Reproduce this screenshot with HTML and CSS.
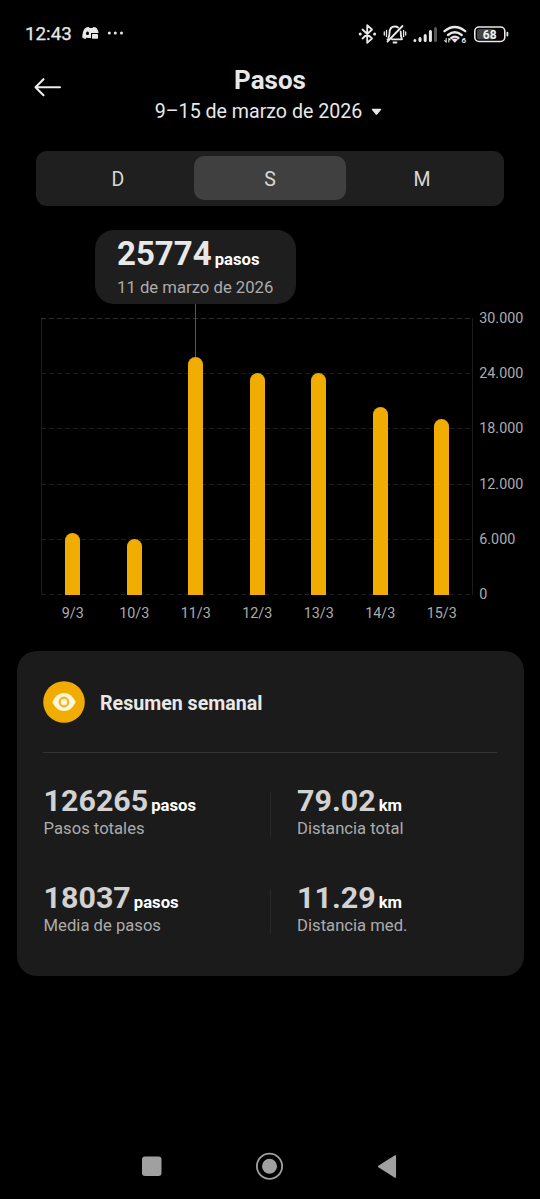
FILE: index.html
```html
<!DOCTYPE html>
<html lang="es">
<head>
<meta charset="utf-8">
<title>Pasos</title>
<link rel="stylesheet" href="styles.css">
</head>
<body>
<div class="screen">
  <div class="status">
    <span class="clock">12:43</span>
    <svg class="status-left" width="46" height="20" viewBox="0 0 46 20" fill="#e8e8e8">
      <path fill-rule="evenodd" d="M3 4.2Q5 2.8 7 3L7.5 4h3L11.200 3Q13.500 3 14.800 4.200Q16.300 6.500 16.600 9H9v5H5.800L4.500 13.500 3.600 15Q1.800 14.800.300 13.500Q.200 7.500 3 4.200ZM5.500 7.600a1.500 1.700 0 1 0 .01 0Z"/>
      <rect x="10" y="10" width="6" height="4.700" rx=".8"/>
      <circle cx="27.300" cy="9" r="1.500"/><circle cx="33.300" cy="9" r="1.500"/><circle cx="39.500" cy="9" r="1.500"/>
    </svg>
    <svg class="status-right" width="154" height="24" viewBox="356 21 154 24" fill="none" stroke="#e8e8e8" stroke-width="1.800" stroke-linecap="round" stroke-linejoin="round">
      <path d="M362.500 28.500 372 37.500 367.200 41.800V24.200L372 28.500 362.500 37.500"/>
      <circle cx="360.200" cy="33" r="1.500" fill="#e8e8e8" stroke="none"/><circle cx="374.600" cy="33" r="1.500" fill="#e8e8e8" stroke="none"/>
      <path d="M388.500 36.500Q389.500 35 389.500 32Q389.500 25.500 395 25.500Q397 25.500 398 26.500M400.700 30.500Q400.500 35 402 38.300H392M387.500 40.500 402.500 25M387.500 38.300H389M393.500 41.500H396.500"/>
      <path stroke-width="1.300" d="M386.500 29.500V35.500M384.300 31V34M403.600 29.500V35.500M405.700 31V34"/>
      <path stroke-width="3" d="M414.900 39.600V39.500M420 39.500V37.500M425.200 39.500V34.500M430.400 39.500V30.500"/>
      <path stroke="#555" stroke-width="3" d="M435.500 39.500V27.500"/>
      <path stroke-width="2.300" d="M444.500 30.200Q454.800 21.800 465.200 30.200M448 34Q454.800 28.500 461.700 34M451.300 37Q454.800 34.300 458.400 37"/>
      <path fill="#e8e8e8" stroke="none" d="M451.700 38.500Q454.800 36.300 458 38.500L454.800 41.800Z"/>
      <path stroke-width="1.100" d="M446.200 37.500V41M444.800 39.700 446.200 41.200M448.800 41V37.500M448.800 37.500 450.200 38.800"/>
      <text class="wifi-gen" x="461.600" y="42">6</text>
      <rect x="474.800" y="26" width="30" height="14.500" rx="4.200" stroke-width="1.600"/>
      <rect x="477" y="28" width="17.500" height="10.500" rx="2" fill="#444" stroke="none"/>
      <path stroke-width="1.800" d="M507.400 31.700V34.500"/>
      <text class="battery-text" x="489.700" y="37.500">68</text>
    </svg>
  </div>

  <header class="header">
    <svg class="back" width="30" height="22" viewBox="0 0 30 22" fill="none" stroke="#ececec" stroke-width="2.100" stroke-linecap="round" stroke-linejoin="round"><path d="M27 11.200H2.500M10.500 3.200 2.500 11.200l8 8"/></svg>
    <div class="heading">
      <h1 class="title">Pasos</h1>
      <div class="range"><span>9–15 de marzo de 2026</span><svg width="11" height="8" viewBox="0 0 11 8"><path d="M1.300.8h8.400q1 .2.400 1L6.200 6.500q-.7.600-1.400 0L.900 1.800q-.5-.8.400-1Z" fill="#e8e8e8"/></svg></div>
    </div>
  </header>

  <nav class="tabs"><span class="tab">D</span><span class="tab tab-active">S</span><span class="tab">M</span></nav>

  <section class="chart">
    <div class="tooltip">
      <div class="tip-value"><b>25774</b><span class="unit">pasos</span></div>
      <div class="tip-date">11 de marzo de 2026</div>
    </div>
    <div class="chart-row">
      <div class="plot">
        <svg class="grid" width="432" height="278" viewBox="0 0 432 278" fill="none" stroke-width="1">
          <path stroke="#1c1c1c" d="M.5 0V277M431.500 0V277"/>
          <path stroke="#303030" stroke-dasharray="5 3" d="M0 .5H432"/>
          <path stroke="#1d1d1d" stroke-dasharray="5 3" d="M0 55.500H432M0 110.500H432M0 166.500H432M0 221.500H432M0 276.500H432"/>
        </svg>
        <div class="bars">
          <i class="bar" style="height:62.5px"></i>
          <i class="bar" style="height:56.5px"></i>
          <i class="bar bar-selected" style="height:238px"></i>
          <i class="bar" style="height:222.5px"></i>
          <i class="bar" style="height:222.5px"></i>
          <i class="bar" style="height:188.5px"></i>
          <i class="bar" style="height:176.5px"></i>
        </div>
      </div>
      <div class="y-axis"><span>30.000</span><span>24.000</span><span>18.000</span><span>12.000</span><span>6.000</span><span>0</span></div>
    </div>
    <div class="x-axis"><span>9/3</span><span>10/3</span><span>11/3</span><span>12/3</span><span>13/3</span><span>14/3</span><span>15/3</span></div>
  </section>

  <section class="card">
    <div class="card-head">
      <svg width="42" height="42" viewBox="0 0 42 42"><circle cx="21" cy="21" r="20.800" fill="#f0ac00"/><path d="M9.200 21Q13.500 12 21 12T32.800 21Q28.500 30 21 30T9.200 21Z" fill="#fff6d8"/><circle cx="21" cy="21" r="4.300" fill="#fff6d8" stroke="#f0b42a" stroke-width="2.200"/></svg>
      <h2 class="card-title">Resumen semanal</h2>
    </div>
    <div class="stats">
      <div class="stat"><div class="value"><b>126265</b><span class="unit">pasos</span></div><div class="label">Pasos totales</div></div>
      <div class="stat stat-right"><div class="value"><b>79.02</b><span class="unit">km</span></div><div class="label">Distancia total</div></div>
      <div class="stat"><div class="value"><b>18037</b><span class="unit">pasos</span></div><div class="label">Media de pasos</div></div>
      <div class="stat stat-right"><div class="value"><b>11.29</b><span class="unit">km</span></div><div class="label">Distancia med.</div></div>
    </div>
  </section>

  <footer class="system-nav">
    <svg width="28" height="28" viewBox="0 0 28 28"><rect x="4" y="4.500" width="19.500" height="19.500" rx="3" fill="#a0a0a0"/></svg>
    <svg width="28" height="28" viewBox="0 0 28 28"><circle cx="13.500" cy="14.300" r="12.600" fill="none" stroke="#a0a0a0" stroke-width="1.800"/><circle cx="13.500" cy="14.300" r="7.500" fill="#a0a0a0"/></svg>
    <svg width="28" height="28" viewBox="0 0 28 28"><path d="M4.700 14.500 21.300 4V25Z" fill="#a0a0a0" stroke="#a0a0a0" stroke-width="1.500" stroke-linejoin="round"/></svg>
  </footer>
</div>
</body>
</html>
```

FILE: styles.css
```css
* { box-sizing: border-box; }
body { margin: 0; background: #000; font-family: Roboto, "Liberation Sans", sans-serif; color: #e8e8e8; }
svg { display: block; flex: none; }
.screen { width: 540px; height: 1199px; display: flex; flex-direction: column; overflow: hidden; white-space: nowrap; }
.status { height: 67px; display: flex; align-items: center; padding: 0 30px 0 25px; }
.clock { font-size: 18.8px; font-weight: 400; width: 57px; -webkit-text-stroke: .25px #e8e8e8; }
.status-right { margin-left: auto; }
.wifi-gen { font-size: 8px; font-weight: 700; fill: #e8e8e8; stroke: none; }
.battery-text { font-size: 12px; font-weight: 700; fill: #f0f0f0; stroke: none; text-anchor: middle; }

.header { height: 84px; display: grid; grid-template-columns: 72px 396px 72px; }
.back { margin: 9px 0 0 33px; }
.heading { text-align: center; }
.title { margin: 0 0 6px; font-size: 26px; line-height: 26px; font-weight: 700; }
.range { display: flex; justify-content: center; align-items: center; gap: 9px; font-size: 19.6px; line-height: 26px; padding-right: 3px; }

.tabs { height: 55px; margin: 0 36px; padding: 5px 6px 6px; border-radius: 11px; background: #1f1f1f; display: grid; grid-template-columns: repeat(3, 1fr); font-size: 19.5px; color: #d8d8d8; }
.tab { display: flex; align-items: center; justify-content: center; border-radius: 10px; padding-top: 2px; }
.tab-active { background: #404040; }

.chart { height: 445px; padding-top: 24px; }
.tooltip { width: 201px; height: 74px; margin-left: 95px; padding: 6px 22px 0; border-radius: 19px; background: #1e1e1e; }
.tip-value, .value { display: flex; align-items: baseline; }
.tip-value { font-size: 33px; line-height: 35px; height: 41px; }
.unit { font-size: 16.7px; font-weight: 700; margin-left: 3px; color: #fff; }
.tip-date { font-size: 16.7px; line-height: 22px; color: #acacac; }
.chart-row { display: flex; margin: 14px 0 0 41px; height: 278px; }
.plot { width: 432px; height: 277px; display: grid; }
.grid, .bars { grid-area: 1 / 1; }
.bars { width: 430.5px; margin-left: 1px; height: 277px; display: grid; grid-template-columns: repeat(7, 1fr); align-items: end; justify-items: center; }
.bar { width: 15px; background: #f0ac00; border-radius: 7.5px 7.5px 0 0; position: relative; }
.bar-selected::before { content: ""; position: absolute; left: 7px; bottom: 100%; width: 1px; height: 53px; background: #555; }
.y-axis { height: 294px; margin: -9px 0 0 6.3px; display: flex; flex-direction: column; justify-content: space-between; font-size: 14.3px; line-height: 18px; color: #acacac; }
.x-axis { width: 430.5px; margin: 7px 0 0 42px; display: grid; grid-template-columns: repeat(7, 1fr); text-align: center; font-size: 14.3px; line-height: 20px; color: #acacac; }

.card { height: 325px; margin: 0 16.500px; padding: 0 26.500px; border-radius: 20px; background: #1b1b1b; }
.card-head { height: 102px; padding-top: 30px; border-bottom: 1px solid #343434; display: flex; align-items: flex-start; gap: 15px; }
.card-title { margin: 0; font-size: 19.6px; line-height: 45px; font-weight: 700; }
.stats { display: grid; grid-template-columns: 226px 1fr; row-gap: 53px; padding: 39px 0 0 .6px; }
.stat { height: 44px; }
.stat-right { border-left: 1px solid #2a2a2a; padding-left: 26.5px; }
.value { font-size: 30.4px; line-height: 30px; height: 26px; margin-top: -6px; color: #d2d2d2; }
.label { margin-top: 6px; font-size: 16.65px; line-height: 22px; color: #acacac; }

.system-nav { margin: 176px auto 0; width: 264px; display: flex; justify-content: space-between; }
```
